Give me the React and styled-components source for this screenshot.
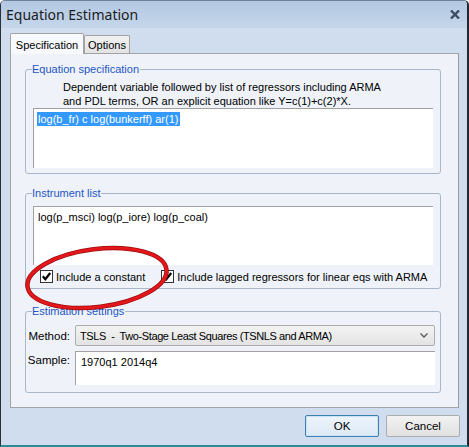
import React from 'react';
import styled, { createGlobalStyle } from 'styled-components';

const GlobalStyle = createGlobalStyle`
  html, body {
    margin: 0;
    padding: 0;
    background: #ffffff;
  }
  body {
    font-family: "Liberation Sans", Arial, sans-serif;
    color: #000;
  }
  * { box-sizing: border-box; }
`;

const Window = styled.div`
  position: relative;
  width: 469px;
  height: 447px;
  display: flex;
  flex-direction: column;
  background: #d0ddee;
  border-left: 1px solid #2a2f38;
  border-right: 2px solid #23272e;
  border-top: 1px solid #6f829c;
  border-bottom: 2px solid #2b8b9b;
  border-radius: 5px 5px 0 0;
  overflow: hidden;
`;

const TitleBar = styled.div`
  flex: none;
  height: 27px;
  display: flex;
  align-items: center;
  justify-content: space-between;
  padding: 0 7px 0 5px;
  background: linear-gradient(#b3c8e2, #c5d6eb);
`;

const Title = styled.span`
  font-family: "Noto Sans", "Open Sans", sans-serif;
  font-size: 14px;
  color: #1b1b1b;
`;

const Client = styled.div`
  flex: 1;
  display: flex;
  flex-direction: column;
  padding: 5px 8px 0 9px;
`;

const TabStrip = styled.div`
  display: flex;
  align-items: flex-end;
  height: 20px;
`;

const Tab = styled.div`
  position: relative;
  display: flex;
  align-items: ${p => (p.$active ? 'flex-start' : 'flex-end')};
  justify-content: center;
  width: ${p => p.$w}px;
  height: ${p => (p.$active ? 21 : 18)}px;
  margin-bottom: ${p => (p.$active ? -1 : 0)}px;
  padding: ${p => (p.$active ? '5px 0 0' : '0 0 2px')};
  font-size: 11px;
  border: 1px solid #a3a3a3;
  border-bottom: none;
  border-radius: 2px 2px 0 0;
  background: ${p => (p.$active ? '#f7f9fc' : 'linear-gradient(#f1f1f1, #e3e3e3)')};
  z-index: ${p => (p.$active ? 1 : 0)};
`;

const Panel = styled.div`
  position: relative;
  width: 449px;
  height: 355px;
  padding: 8px 17px 0 14px;
  background: #eff3f9;
  border: 1px solid #a3a3a3;
  border-right-color: #9a9a9a;
`;

const Group = styled.fieldset`
  margin: ${p => p.$top || 0}px 0 0;
  padding: ${p => p.$pad};
  min-width: 0;
  border: 1px solid #a9b7ca;
  border-radius: 3px;
`;

const Legend = styled.legend`
  margin-left: -1px;
  padding: 0 1px 0 0;
  font-size: 11px;
  line-height: 14px;
  color: #1d55c4;
`;

const Hint = styled.div`
  padding-left: 30px;
  font-size: 11px;
  line-height: 14px;
`;

const EditBox = styled.div`
  height: ${p => p.$h}px;
  padding: 3px 4px;
  background: #ffffff;
  border-top: 1px solid #a0a0a0;
  border-left: 1px solid #a0a0a0;
  font-size: 11px;
  line-height: 14px;
`;

const Selected = styled.span`
  margin-left: -1px;
  padding: 1px 2px 1px 1px;
  background: #3399ff;
  color: #ffffff;
`;

const CheckRow = styled.div`
  display: flex;
  align-items: center;
  gap: 16px;
  height: 23px;
  padding-left: 7px;
`;

const CheckItem = styled.label`
  display: flex;
  align-items: center;
  gap: 3px;
  font-size: 11px;
`;

const Box = styled.span`
  display: inline-flex;
  align-items: center;
  justify-content: center;
  width: 13px;
  height: 13px;
  background: #ffffff;
  border: 1px solid #333333;
`;

const Fields = styled.div`
  display: grid;
  grid-template-columns: 44px 360px;
  column-gap: 5px;
  row-gap: 5px;
  margin: 0 -2px 0 -7px;
`;

const FieldLabel = styled.div`
  text-align: right;
  font-size: 11.5px;
  align-self: ${p => (p.$top ? 'start' : 'center')};
  padding-top: ${p => (p.$top ? 3 : 0)}px;
`;

const Select = styled.div`
  display: flex;
  align-items: center;
  justify-content: space-between;
  height: 21px;
  padding: 0 6px 0 4px;
  border: 1px solid #acacac;
  border-radius: 2px;
  background: linear-gradient(#f3f3f3, #e3e3e3);
  font-size: 11px;
  letter-spacing: -0.4px;
  white-space: pre;
`;

const SampleBox = styled.div`
  height: 34px;
  padding: 4px 5px;
  background: #ffffff;
  border-top: 1px solid #a0a0a0;
  border-left: 1px solid #a0a0a0;
  font-size: 11px;
`;

const Ring = styled.svg`
  position: absolute;
  left: 12px;
  top: 188px;
  pointer-events: none;
  overflow: visible;
`;

const Footer = styled.div`
  display: flex;
  justify-content: flex-end;
  gap: 7px;
  padding-top: 7px;
  margin-right: -1px;
`;

const Button = styled.button`
  width: 74px;
  height: 22px;
  padding: 0;
  font-family: "Liberation Sans", Arial, sans-serif;
  font-size: 11.5px;
  color: #000;
  border-radius: 2px;
  border: 1px solid ${p => (p.$default ? '#3c7fb1' : '#acacac')};
  background: ${p =>
    p.$default ? 'linear-gradient(#edf4fb, #dce9f5)' : 'linear-gradient(#f2f2f2, #e0e0e0)'};
  box-shadow: ${p => (p.$default ? 'inset 0 0 0 1px #cbe3f6' : 'none')};
`;

const CloseIcon = () => (
  <svg width="10" height="9" viewBox="0 0 10 9">
    <path d="M1 0.5 L9 8.5 M9 0.5 L1 8.5" stroke="#3e4c62" strokeWidth="2.4" />
  </svg>
);

const Tick = () => (
  <svg width="11" height="11" viewBox="0 0 11 11">
    <path d="M1.8 5.3 L4.3 8.2 L9.2 2" fill="none" stroke="#000" strokeWidth="2.2" />
  </svg>
);

const Chevron = () => (
  <svg width="8" height="5" viewBox="0 0 8 5">
    <path d="M0.5 0.5 L4 4 L7.5 0.5" fill="none" stroke="#5a5a5a" strokeWidth="1.3" />
  </svg>
);

const Checkbox = ({ children }) => (
  <CheckItem>
    <Box>
      <Tick />
    </Box>
    {children}
  </CheckItem>
);

const App = () => (
  <>
    <GlobalStyle />
    <Window>
      <TitleBar>
        <Title>Equation Estimation</Title>
        <CloseIcon />
      </TitleBar>
      <Client>
        <TabStrip>
          <Tab $active $w={74}>Specification</Tab>
          <Tab $w={46}>Options</Tab>
        </TabStrip>
        <Panel>
          <Group $pad="4px 7px 5px">
            <Legend>Equation specification</Legend>
            <Hint>
              Dependent variable followed by list of regressors including ARMA
              <br />
              and PDL terms, OR an explicit equation like Y=c(1)+c(2)*X.
            </Hint>
            <EditBox $h={60}>
              <Selected>log(b_fr) c log(bunkerff) ar(1)</Selected>
            </EditBox>
          </Group>

          <Group $top={12} $pad="6px 7px 0">
            <Legend>Instrument list</Legend>
            <EditBox $h={59}>log(p_msci) log(p_iore) log(p_coal)</EditBox>
            <CheckRow>
              <Checkbox>Include a constant</Checkbox>
              <Checkbox>Include lagged regressors for linear eqs with ARMA</Checkbox>
            </CheckRow>
          </Group>

          <Group $top={15} $pad="7px 7px 7px">
            <Legend>Estimation settings</Legend>
            <Fields>
              <FieldLabel>Method:</FieldLabel>
              <Select>
                <span>TSLS  -  Two-Stage Least Squares (TSNLS and ARMA)</span>
                <Chevron />
              </Select>
              <FieldLabel $top>Sample:</FieldLabel>
              <SampleBox>1970q1 2014q4</SampleBox>
            </Fields>
          </Group>

          {/* hand-drawn highlight around the constant checkbox */}
          <Ring width="150" height="76" viewBox="0 0 150 76">
            <ellipse cx="74" cy="36" rx="70" ry="29" transform="rotate(-7 74 36)"
              fill="none" stroke="#9b1010" strokeWidth="4.5" />
            <ellipse cx="74" cy="36" rx="70" ry="29" transform="rotate(-7 74 36)"
              fill="none" stroke="#e3161b" strokeWidth="3" />
          </Ring>
        </Panel>
        <Footer>
          <Button $default>OK</Button>
          <Button>Cancel</Button>
        </Footer>
      </Client>
    </Window>
  </>
);

export default App;
